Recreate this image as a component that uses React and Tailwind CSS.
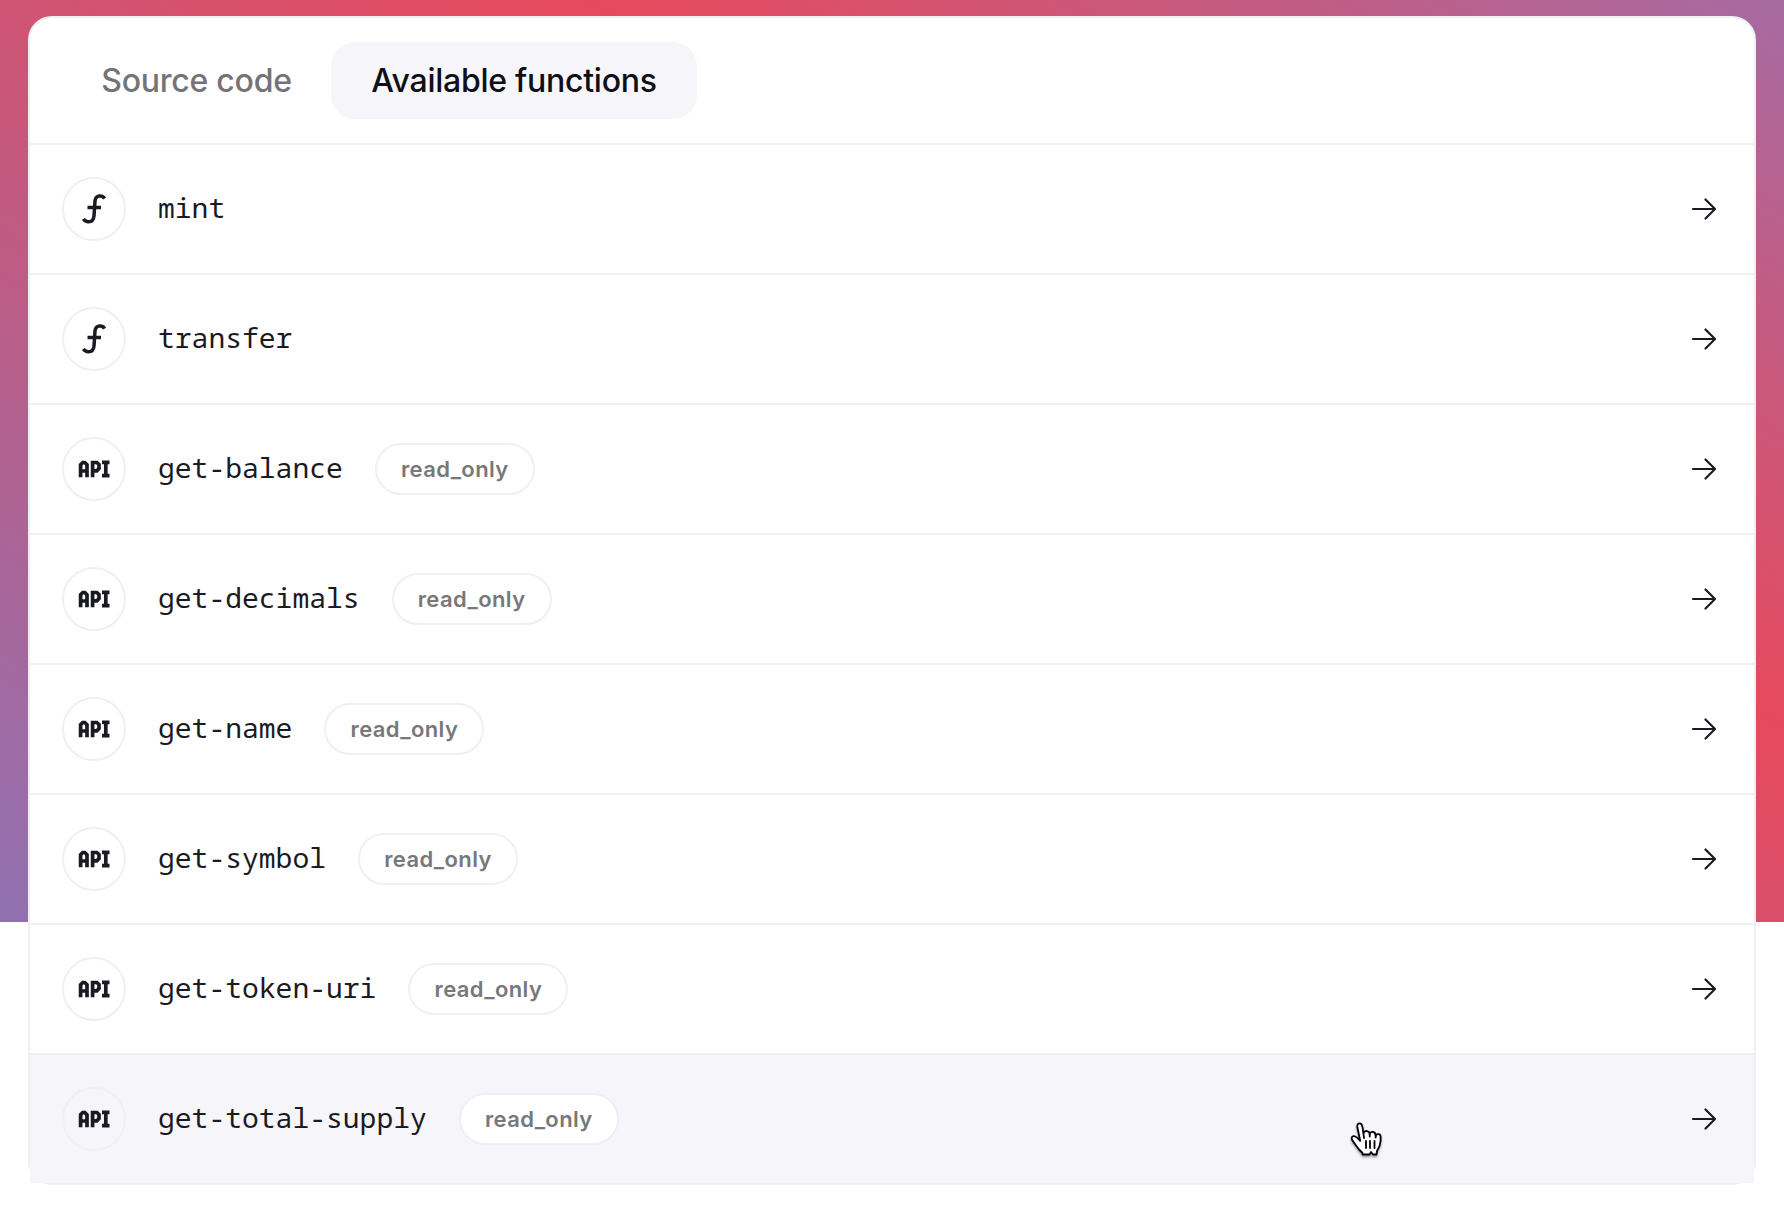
import React from "react";

const functions = [
  { name: "mint" },
  { name: "transfer" },
  { name: "get-balance", readOnly: true },
  { name: "get-decimals", readOnly: true },
  { name: "get-name", readOnly: true },
  { name: "get-symbol", readOnly: true },
  { name: "get-token-uri", readOnly: true },
  { name: "get-total-supply", readOnly: true, hovered: true },
];

function FunctionIcon() {
  return (
    <svg width="24" height="30" viewBox="0 0 24 30" fill="none" stroke="#1a1a23" strokeWidth="3.5" strokeLinejoin="round">
      <path d="M22.600 4.500C21.300 2.300 19.500 1.700 17.300 2C14.800 2.300 13.300 4 13 7L12 22C11.700 25.500 10 27.800 6.500 27.800C4.200 27.800 2.600 27 1.400 25" />
      <path d="M5.500 13.500H19" />
    </svg>
  );
}

function ApiIcon() {
  return (
    <svg width="32" height="18" viewBox="0 0 32 18" fill="none" stroke="#1a1a23" strokeWidth="3.700">
      <path d="M2.600 17.300V4.800L4.800 2.500H6.800L9 4.800V17.300M2.600 11H9" />
      <path d="M14.600 17.300V2.500H18.800L21 4.500V8.500L18.800 10.800H14.600" />
      <path d="M24 2.300H31.500M24 15.700H31.500M27.800 2V15.500" />
    </svg>
  );
}

function ArrowIcon() {
  return (
    <svg width="26" height="22" viewBox="0 0 26 22" fill="none" stroke="#1a1a23" strokeWidth="2.200" strokeLinecap="round" strokeLinejoin="round">
      <path d="M2 11H24M14.500 1.500L24 11L14.500 20.500" />
    </svg>
  );
}

function HandCursor() {
  return (
    <svg className="absolute left-[1350px] top-[1121px] drop-shadow-[0_2px_1px_rgba(0,0,0,0.35)]" width="34" height="36" viewBox="0 0 34 36" fill="#fff" stroke="#000" strokeWidth="1.8" strokeLinejoin="round" strokeLinecap="round">
      <path d="M14 17L12.500 6C12 3.500 11 2.400 9.600 2.400C7.800 2.400 7 4 7.300 6L10.200 19.800C8.500 18 6.500 15.500 4 15.200C1.800 15 1 17 2.200 19C4 22 7 25.500 9 28.500L12.500 32V33.500H19.500L21 31L23 33.500H26.500L27 30C29 27 30.300 24 30.600 20V15.500C30.600 12.800 26.300 12.200 25.700 14.800C25.700 10.200 20.300 9.800 19.700 13C19.500 9.500 14.500 9 13.700 12" />
      <path d="M19.700 13V15.500M25.700 14.800V16.500M16 20V27M20 20V27M24.500 20V27" />
    </svg>
  );
}

function FunctionRow({ name, readOnly, hovered }) {
  return (
    <li className={`flex h-[130px] items-center border-b-2 border-[#f0f0f2] pl-8 pr-[37px] last:h-32 last:border-b-0 ${hovered ? "bg-[#f5f5fa]" : "bg-white"}`}>
      <span className="flex size-16 shrink-0 items-center justify-center rounded-full border-2 border-[#f0f0f2]">
        {readOnly ? <ApiIcon /> : <FunctionIcon />}
      </span>
      <span className="ml-8 pb-[5px] font-['Noto_Sans_Mono','DejaVu_Sans_Mono',monospace] text-[28px] leading-none text-[#1a1a23]">{name}</span>
      {readOnly && (
        <span className="ml-8 flex h-[52px] w-40 items-center justify-center rounded-full border-2 border-[#f0f0f2] bg-white font-[Inter] text-[22px] font-semibold tracking-[0.4px] text-[#78787a]">
          read_only
        </span>
      )}
      <span className="ml-auto">
        <ArrowIcon />
      </span>
    </li>
  );
}

export default function App() {
  return (
    <div className="relative h-[1206px] w-[1784px] overflow-hidden bg-white bg-[linear-gradient(31.3deg,#9171b1,#e7495c_63.8%,#a66ba2)] bg-[length:100%_922px] bg-no-repeat px-7 pt-4">
      <main className="rounded-3xl border-2 border-[#f0f0f2] bg-white">
        <nav className="flex h-[127px] items-center border-b-2 border-[#f0f0f2] pl-8 font-[Inter] text-[32px] font-medium tracking-[-0.25px]">
          <button className="h-[77px] w-[269px] pt-px text-[#747476]">Source code</button>
          <button className="h-[77px] w-[366px] rounded-3xl bg-[#f5f5fa] pt-px text-[#0f0f17]">Available functions</button>
        </nav>
        <ul>
          {functions.map((fn) => (
            <FunctionRow key={fn.name} {...fn} />
          ))}
        </ul>
      </main>
      <HandCursor />
    </div>
  );
}
